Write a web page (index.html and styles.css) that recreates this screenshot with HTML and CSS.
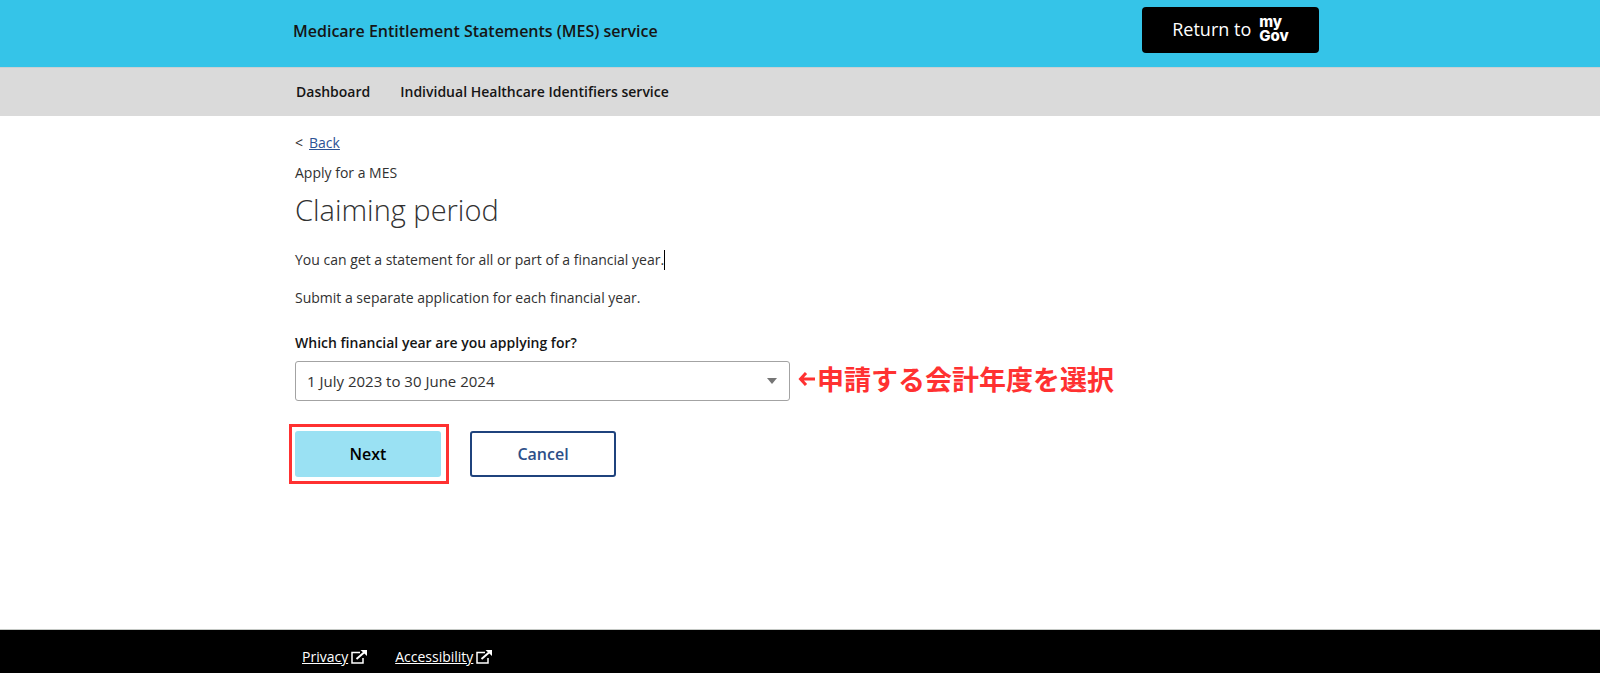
FILE: index.html
```html
<!DOCTYPE html>
<html lang="en">
<head>
    <meta charset="UTF-8">
    <meta name="viewport" content="width=device-width, initial-scale=1">
    <title>Claiming period</title>
    <link rel="stylesheet" href="styles.css">
</head>
<body>
    <header class="header">
        <div class="wrap header-inner">
            <div class="service-name">Medicare Entitlement Statements (MES) service</div>
            <button type="button" class="mygov-btn">
                <span>Return to</span>
                <span class="mygov-logo">my<br>Gov</span>
            </button>
        </div>
    </header>

    <nav class="nav">
        <div class="wrap nav-inner">
            <a href="#">Dashboard</a>
            <a href="#">Individual Healthcare Identifiers service</a>
        </div>
    </nav>

    <main class="wrap main">
        <div class="back"><span>&lt;</span><a href="#">Back</a></div>
        <div class="subtitle">Apply for a MES</div>
        <h1>Claiming period</h1>
        <p>You can get a statement for all or part of a financial year.<span class="caret"></span></p>
        <p>Submit a separate application for each financial year.</p>

        <form>
            <label for="year">Which financial year are you applying for?</label>
            <div class="field-row">
                <div class="select-box">
                    <select id="year">
                        <option>1 July 2023 to 30 June 2024</option>
                    </select>
                    <svg class="select-arrow" width="10" height="6" viewBox="0 0 10 6"><path d="M0 0h10L5 6z" fill="#757575"/></svg>
                </div>
                <div class="note" lang="ja">
                    <svg width="17" height="14" viewBox="0 0 17 14" fill="none" stroke="#ff3131" stroke-width="3"><path d="M2.5 7H17M8 1L2.5 7L8 13"/></svg>
                    <span>申請する会計年度を選択</span>
                </div>
            </div>
            <div class="buttons">
                <div class="highlight">
                    <button type="button" class="btn btn-next">Next</button>
                </div>
                <button type="button" class="btn btn-cancel">Cancel</button>
            </div>
        </form>
    </main>

    <footer class="footer">
        <div class="wrap footer-inner">
            <a href="#">Privacy<svg width="16" height="14" viewBox="0 0 16 14" fill="none" stroke="#fff"><path d="M9 2.5H1v10.500h11V8" stroke-width="1.500"/><path d="M5.500 9L13 2.500" stroke-width="2"/><path d="M9.500 0H16v6z" fill="#fff" stroke="none"/></svg></a>
            <a href="#">Accessibility<svg width="16" height="14" viewBox="0 0 16 14" fill="none" stroke="#fff"><path d="M9 2.5H1v10.500h11V8" stroke-width="1.500"/><path d="M5.500 9L13 2.500" stroke-width="2"/><path d="M9.500 0H16v6z" fill="#fff" stroke="none"/></svg></a>
        </div>
    </footer>
</body>
</html>
```

FILE: styles.css
```css
* {
    box-sizing: border-box;
}
body {
    margin: 0;
    min-height: 100vh;
    display: flex;
    flex-direction: column;
    font-family: "Segoe UI", "Open Sans", "Noto Sans", sans-serif;
    font-size: 14px;
    line-height: 20px;
    color: #313131;
    background: #fff;
}
.wrap {
    width: 100%;
    max-width: 1038px;
    margin: 0 auto;
    padding-left: 14px;
}
.header {
    background: #35c4e8;
}
.header-inner {
    display: flex;
    justify-content: space-between;
    align-items: flex-start;
    padding-top: 7px;
    padding-bottom: 14px;
    padding-left: 12px;
}
.service-name {
    padding-top: 14px;
    font-size: 16px;
    font-weight: 600;
    color: #151515;
}
.mygov-btn {
    display: flex;
    justify-content: center;
    align-items: center;
    gap: 8px;
    width: 177px;
    height: 46px;
    padding: 0 0 3px;
    border: none;
    border-radius: 4px;
    background: #000;
    color: #fff;
    font-family: inherit;
    font-size: 18px;
    cursor: pointer;
}
.mygov-logo {
    font-family: Inter, "Open Sans", sans-serif;
    font-size: 15px;
    font-weight: 800;
    line-height: 14px;
    text-align: left;
}
.nav {
    background: #dadada;
    border-top: 1px solid #c8d0d3;
}
.nav-inner {
    display: flex;
    gap: 30px;
    padding-top: 14px;
    padding-bottom: 14px;
    padding-left: 15px;
}
.nav a {
    color: #151515;
    font-weight: 600;
    text-decoration: none;
}
.main {
    flex: 1;
    padding-top: 17px;
    padding-bottom: 40px;
}
.back {
    display: flex;
    gap: 6px;
}
.back a {
    color: #2d5294;
}
.subtitle {
    margin-top: 10px;
}
h1 {
    margin: 7px 0 20px;
    font-size: 29px;
    font-weight: 300;
    line-height: 40px;
}
p {
    margin: 0 0 18px;
}
.caret {
    display: inline-block;
    width: 1px;
    height: 20px;
    vertical-align: top;
    background: #000;
}
label {
    display: block;
    margin-top: 25px;
    margin-bottom: 8px;
    font-weight: 600;
    color: #151515;
}
.field-row {
    display: flex;
    align-items: flex-start;
    gap: 8px;
}
.select-box {
    position: relative;
    flex: 0 1 495px;
}
select {
    display: block;
    width: 100%;
    height: 40px;
    padding: 0 32px 0 11px;
    border: 1px solid #a3a3a3;
    border-radius: 3px;
    background: #fff;
    color: #313131;
    font-family: inherit;
    font-size: 15px;
    appearance: none;
}
.select-arrow {
    position: absolute;
    right: 13px;
    top: 17px;
    pointer-events: none;
}
.note {
    display: flex;
    align-items: center;
    gap: 2px;
    color: #ff3131;
    font-family: "Noto Sans CJK JP", sans-serif;
    font-size: 27px;
    font-weight: 700;
    line-height: 36px;
    white-space: nowrap;
}
.buttons {
    display: flex;
    align-items: center;
    gap: 21px;
    margin-top: 23px;
}
.highlight {
    margin-left: -6px;
    padding: 4px 5px 4px 3px;
    border: 3px solid #ff3131;
}
.btn {
    display: block;
    width: 146px;
    height: 46px;
    border-radius: 3px;
    font-family: inherit;
    font-size: 16px;
    font-weight: 600;
    cursor: pointer;
}
.btn-next {
    border: none;
    background: #9ae1f3;
    color: #000;
}
.btn-cancel {
    border: 2px solid #1f437d;
    background: #fff;
    color: #2d4f88;
}
.footer {
    background: #000;
    border-top: 1px solid #c4c8c4;
}
.footer-inner {
    display: flex;
    gap: 28px;
    padding-top: 17px;
    padding-bottom: 6px;
    padding-left: 21px;
}
.footer a {
    display: flex;
    align-items: center;
    gap: 3px;
    color: #fff;
}
```
